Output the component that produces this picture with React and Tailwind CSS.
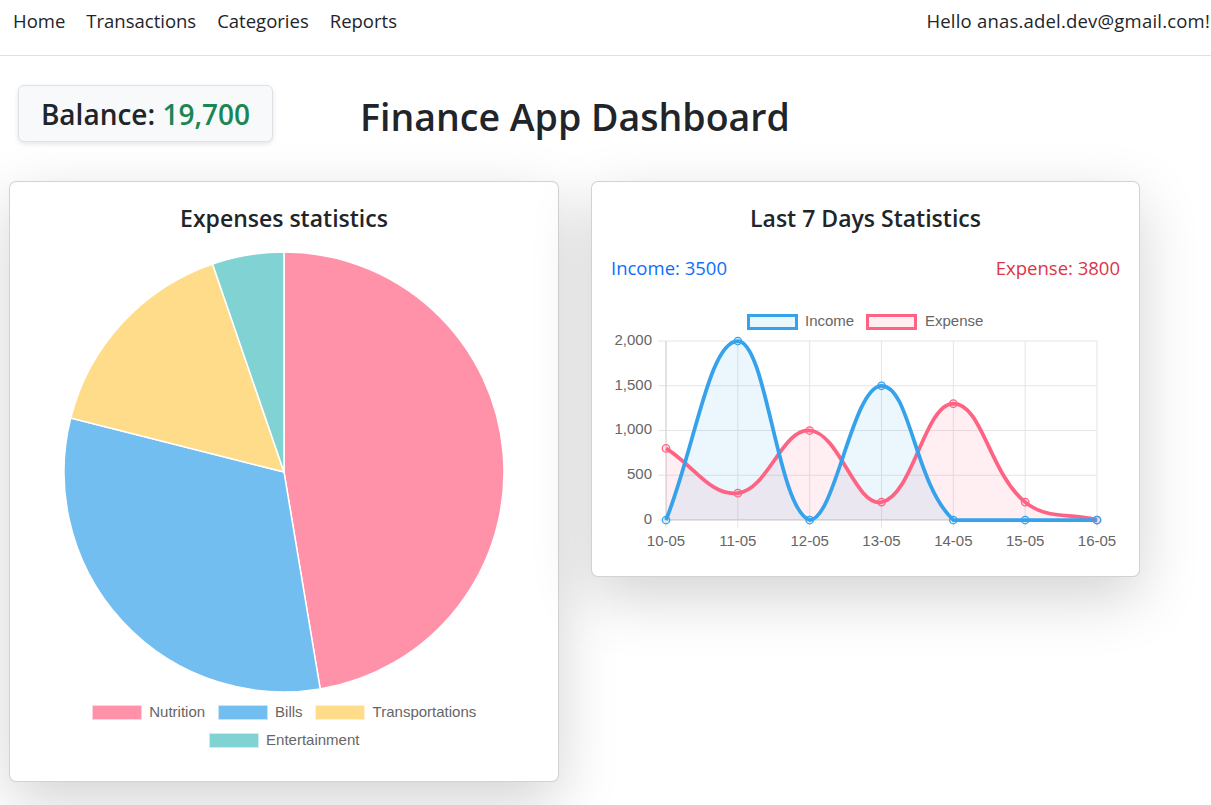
import React from 'react'

const expenses = [
  { label: 'Nutrition', value: 1800, color: '#FF92A9' },
  { label: 'Bills', value: 1200, color: '#72BEF1' },
  { label: 'Transportations', value: 600, color: '#FFDC89' },
  { label: 'Entertainment', value: 200, color: '#81D3D3' },
]

const days = ['10-05', '11-05', '12-05', '13-05', '14-05', '15-05', '16-05']
const income = [0, 2000, 0, 1500, 0, 0, 0]
const expense = [800, 300, 1000, 200, 1300, 200, 0]

// chart area inside the svg
const area = { left: 74, right: 505, top: 41, bottom: 220 }
const xAt = (i) => area.left + (i * (area.right - area.left)) / 6
const yAt = (v) => area.bottom - (v / 2000) * (area.bottom - area.top)

// same idea as chart.js splineCurve, tension 0.4
function smoothPath(values) {
  const pts = values.map((v, i) => ({ x: xAt(i), y: yAt(v) }))
  const cps = pts.map((mid, i) => {
    const first = pts[i - 1] || mid
    const after = pts[i + 1] || mid
    const d01 = Math.hypot(mid.x - first.x, mid.y - first.y)
    const d12 = Math.hypot(after.x - mid.x, after.y - mid.y)
    let s01 = d01 / (d01 + d12)
    let s12 = d12 / (d01 + d12)
    if (isNaN(s01)) s01 = 0
    if (isNaN(s12)) s12 = 0
    const fa = 0.4 * s01
    const fb = 0.4 * s12
    const clamp = (p) => ({
      x: Math.min(Math.max(p.x, area.left), area.right),
      y: Math.min(Math.max(p.y, area.top), area.bottom),
    })
    return {
      prev: clamp({ x: mid.x - fa * (after.x - first.x), y: mid.y - fa * (after.y - first.y) }),
      next: clamp({ x: mid.x + fb * (after.x - first.x), y: mid.y + fb * (after.y - first.y) }),
    }
  })
  let d = `M${pts[0].x},${pts[0].y}`
  for (let i = 0; i < pts.length - 1; i++) {
    d += ` C${cps[i].next.x},${cps[i].next.y} ${cps[i + 1].prev.x},${cps[i + 1].prev.y} ${pts[i + 1].x},${pts[i + 1].y}`
  }
  return { d, pts }
}

function PieChart() {
  const total = expenses.reduce((s, e) => s + e.value, 0)
  const r = 220
  const c = 222
  let angle = 0
  return (
    <svg width="444" height="444" viewBox="0 0 444 444" className="mx-auto block">
      {expenses.map((e) => {
        const start = angle
        const end = angle + (e.value / total) * Math.PI * 2
        angle = end
        const x1 = c + r * Math.sin(start)
        const y1 = c - r * Math.cos(start)
        const x2 = c + r * Math.sin(end)
        const y2 = c - r * Math.cos(end)
        const large = end - start > Math.PI ? 1 : 0
        return (
          <path
            key={e.label}
            d={`M${c},${c} L${x1},${y1} A${r},${r} 0 ${large} 1 ${x2},${y2} Z`}
            fill={e.color}
            stroke="#fff"
            strokeWidth="1.5"
            strokeLinejoin="round"
          />
        )
      })}
    </svg>
  )
}

function LineChart() {
  const inc = smoothPath(income)
  const exp = smoothPath(expense)
  const fillOf = (p) => `${p.d} L${area.right},${area.bottom} L${area.left},${area.bottom} Z`
  const ticks = [0, 500, 1000, 1500, 2000]
  const font = { fontFamily: '"Liberation Sans", Arial, sans-serif', fontSize: 15, fill: '#666' }
  return (
    <svg width="547" height="260" viewBox="0 0 547 260" className="block">
      {/* legend */}
      <rect x="156.5" y="15.5" width="48" height="13" fill="rgba(54,162,235,0.1)" stroke="#36A2EB" strokeWidth="3" />
      <text x="213" y="22" dominantBaseline="middle" style={font}>Income</text>
      <rect x="275.5" y="15.5" width="48" height="13" fill="rgba(255,99,132,0.1)" stroke="#FF6384" strokeWidth="3" />
      <text x="333" y="22" dominantBaseline="middle" style={font}>Expense</text>

      {/* grid */}
      {ticks.map((t) => (
        <g key={t}>
          <line x1="66" x2={area.right} y1={yAt(t)} y2={yAt(t)} stroke="#e5e5e5" strokeWidth="1" />
          <text x="60" y={yAt(t)} textAnchor="end" dominantBaseline="middle" style={font}>
            {t.toLocaleString('en-US')}
          </text>
        </g>
      ))}
      {days.map((d, i) => (
        <g key={d}>
          <line x1={xAt(i)} x2={xAt(i)} y1={area.top} y2={area.bottom + 8} stroke="#e5e5e5" strokeWidth="1" />
          <text x={xAt(i)} y="242" textAnchor="middle" dominantBaseline="middle" style={font}>{d}</text>
        </g>
      ))}
      <line x1={area.left} x2={area.right} y1={area.bottom} y2={area.bottom} stroke="#d4d4d4" strokeWidth="1" />
      <line x1={area.left} x2={area.left} y1={area.top} y2={area.bottom} stroke="#d4d4d4" strokeWidth="1" />

      {/* expense first so income sits on top */}
      <path d={fillOf(exp)} fill="rgba(255,99,132,0.1)" />
      <path d={fillOf(inc)} fill="rgba(54,162,235,0.1)" />
      <path d={exp.d} fill="none" stroke="#FF6384" strokeWidth="3.75" />
      <path d={inc.d} fill="none" stroke="#36A2EB" strokeWidth="3.75" />
      {exp.pts.map((p, i) => (
        <circle key={'e' + i} cx={p.x} cy={p.y} r="3.75" fill="rgba(255,99,132,0.15)" stroke="#FF6384" strokeWidth="1.25" />
      ))}
      {inc.pts.map((p, i) => (
        <circle key={'i' + i} cx={p.x} cy={p.y} r="3.75" fill="rgba(54,162,235,0.15)" stroke="#36A2EB" strokeWidth="1.25" />
      ))}
    </svg>
  )
}

function Card({ className, children }) {
  return (
    <div className={`rounded-[7px] border border-black/[0.175] bg-white shadow-[0_20px_60px_rgba(0,0,0,0.175)] ${className}`}>
      {children}
    </div>
  )
}

export default function App() {
  return (
    <div className="min-h-screen bg-white text-[#212529]" style={{ fontFamily: '"Open Sans", "Noto Sans", sans-serif' }}>
      <nav className="flex h-[56px] items-start justify-between border-b border-[#dee2e6] pl-[13px] pr-[1px] pt-[7px] text-[18.5px] leading-[28px]">
        <div className="flex gap-[21px]">
          <a>Home</a>
          <a>Transactions</a>
          <a>Categories</a>
          <a>Reports</a>
        </div>
        <span className="tracking-[0.2px]">Hello anas.adel.dev@gmail.com!</span>
      </nav>

      <div className="flex items-start pl-[18px] pt-[29px]">
        <div className="flex h-[57px] w-[255px] items-center justify-center rounded-[6px] border border-[#dee2e6] bg-[#f8f9fa] shadow-[0_2px_5px_rgba(0,0,0,0.1)]">
          <h3 className="text-[28px] font-semibold leading-none">
            Balance: <span className="text-[#198754]">19,700</span>
          </h3>
        </div>
        <h1 className="ml-[87px] mt-[9px] text-[37.5px] font-semibold leading-[1.2]">Finance App Dashboard</h1>
      </div>

      <div className="mt-[39px] flex items-start gap-[32px] pl-[9px]">
        <Card className="w-[550px] pb-[27px] pt-[22px]">
          <h4 className="text-center text-[23px] font-semibold leading-[28px]">Expenses statistics</h4>
          <div className="mt-[18px]">
            <PieChart />
          </div>
          <div
            className="mx-auto mt-[4px] flex max-w-[480px] flex-wrap justify-center gap-x-[12.5px] text-[15px] leading-[28px] text-[#666]"
            style={{ fontFamily: '"Liberation Sans", Arial, sans-serif' }}
          >
            {expenses.map((e) => (
              <div key={e.label} className="flex items-center gap-[7.5px]">
                <span className="h-[15px] w-[50px] border border-white/60" style={{ backgroundColor: e.color }} />
                <span>{e.label}</span>
              </div>
            ))}
          </div>
        </Card>

        <Card className="w-[549px] pb-[16px] pt-[22px]">
          <h4 className="text-center text-[23px] font-semibold leading-[28px]">Last 7 Days Statistics</h4>
          <div className="mt-[22px] flex justify-between px-[19px] text-[18.5px] leading-[28px]">
            <span className="text-[#0d6efd]">Income: 3500</span>
            <span className="text-[#dc3545]">Expense: 3800</span>
          </div>
          <div className="mt-[18px]">
            <LineChart />
          </div>
        </Card>
      </div>
    </div>
  )
}
